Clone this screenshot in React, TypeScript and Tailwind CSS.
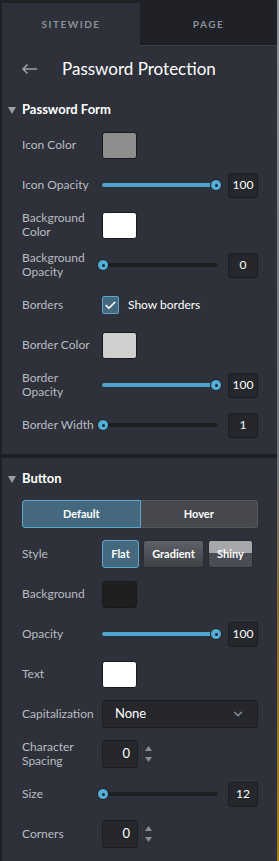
import { ChevronDown, Check } from 'lucide-react';

const font = { fontFamily: 'Lato, "Open Sans", sans-serif' };

function Label({ children }: { children: React.ReactNode }) {
  return <div className="w-[80px] shrink-0 text-[12px] leading-[14px] text-[#b8bcc3]">{children}</div>;
}

function Row({ label, children }: { label: React.ReactNode; children: React.ReactNode }) {
  return (
    <div className="flex h-[40px] items-center pl-[20px] pr-[19px]">
      <Label>{label}</Label>
      <div className="flex flex-1 items-center">{children}</div>
    </div>
  );
}

function Swatch({ color }: { color: string }) {
  return <div className={`h-[27px] w-[35px] rounded-[3px] border border-[#18191c] ${color}`} />;
}

function NumBox({ value }: { value: string }) {
  return (
    <div className="flex h-[25px] w-[30px] items-center justify-center rounded-[3px] border border-[#1b1c20] bg-[#25272c] text-[12px] text-white">
      {value}
    </div>
  );
}

function Slider({ value, full }: { value: string; full?: boolean }) {
  return (
    <div className="flex flex-1 items-center gap-[6px]">
      <div className="relative h-[12px] flex-1">
        <div className="absolute left-0 right-[4px] top-[4px] h-[4px] rounded-full bg-[#1d1f23]" />
        {full && <div className="absolute left-0 right-[4px] top-[4px] h-[4px] rounded-full bg-[#4ea5cf]" />}
        <div
          className={`absolute top-0 flex h-[12px] w-[12px] items-center justify-center rounded-full border border-[#1a1c20] bg-[#55aed6] ${
            full ? 'right-0' : 'left-[-5px]'
          }`}
        >
          <div className="h-[3px] w-[3px] rounded-full bg-[#1c2a33]" />
        </div>
      </div>
      <NumBox value={value} />
    </div>
  );
}

function Spinner({ value }: { value: string }) {
  return (
    <div className="flex items-center gap-[7px]">
      <div className="flex h-[28px] w-[36px] items-center justify-end rounded-[3px] border border-[#1b1c20] bg-[#25272c] pr-[7px] text-[13px] text-white">
        {value}
      </div>
      <div className="flex flex-col gap-[6px] text-[#8a8e95]">
        <svg width="7" height="5" viewBox="0 0 7 5">
          <path d="M3.5 0L7 5H0z" fill="currentColor" />
        </svg>
        <svg width="7" height="5" viewBox="0 0 7 5">
          <path d="M0 0h7L3.5 5z" fill="currentColor" />
        </svg>
      </div>
    </div>
  );
}

function SectionHeader({ title }: { title: string }) {
  return (
    <div className="flex h-[26px] items-center gap-[6px] pl-[6px]">
      <svg width="8" height="7" viewBox="0 0 8 7" className="text-[#9a9ea5]">
        <path d="M0 0h8L4 7z" fill="currentColor" />
      </svg>
      <span className="text-[13px] font-bold text-white">{title}</span>
    </div>
  );
}

export default function App() {
  return (
    <div style={font} className="flex h-[861px] w-[279px] bg-[#2e3139]">
      <div className="w-[2px] bg-[#1f2125]" />
      <div className="flex flex-1 flex-col">
        <div className="h-[3px] bg-[#1f2125]" />
        <div className="flex h-[43px]">
          <div className="flex w-[138px] items-center justify-center text-[10px] font-bold tracking-[0.15em] text-[#8c919a]">
            SITEWIDE
          </div>
          <div className="flex flex-1 items-center justify-center border-b border-[#3a3d44] bg-[#1f2126] text-[10px] font-bold tracking-[0.15em] text-[#8c919a]">
            PAGE
          </div>
        </div>
        <div className="flex h-[46px] items-center pl-[19px]">
          <svg width="17" height="12" viewBox="0 0 17 12" className="text-[#9aa0a8]">
            <path d="M16 6H2M6.5 1.5L2 6l4.5 4.5" stroke="currentColor" strokeWidth="1.6" fill="none" />
          </svg>
          <span className="ml-[24px] text-[17px] text-white">Password Protection</span>
        </div>
        <div className="mt-[5px]">
          <SectionHeader title="Password Form" />
        </div>
        <div className="mt-[2px]">
          <Row label="Icon Color">
            <Swatch color="bg-[#8e8e8e]" />
          </Row>
          <Row label="Icon Opacity">
            <Slider value="100" full />
          </Row>
          <Row label={<>Background<br />Color</>}>
            <Swatch color="bg-white" />
          </Row>
          <Row label={<>Background<br />Opacity</>}>
            <Slider value="0" />
          </Row>
          <Row label="Borders">
            <div className="flex h-[18px] w-[17px] items-center justify-center rounded-[2px] border border-[#5aa7cf] bg-[#44697f]">
              <Check className="h-[13px] w-[13px] text-white" strokeWidth={3} />
            </div>
            <span className="ml-[9px] text-[12px] text-white">Show borders</span>
          </Row>
          <Row label="Border Color">
            <Swatch color="bg-[#d0d0d0]" />
          </Row>
          <Row label={<>Border<br />Opacity</>}>
            <Slider value="100" full />
          </Row>
          <Row label="Border Width">
            <Slider value="1" />
          </Row>
        </div>
        <div className="mt-[9px] h-[4px] bg-[#1d1f23]" />
        <div className="mt-[8px]">
          <SectionHeader title="Button" />
        </div>
        <div className="ml-[20px] mr-[19px] mt-[8px] flex h-[28px] text-[11px] font-bold text-white">
          <div className="flex flex-1 items-center justify-center rounded-l-[3px] border border-[#5aa7cf] bg-[#44697f]">
            Default
          </div>
          <div className="flex flex-1 items-center justify-center rounded-r-[3px] border border-l-0 border-[#55585f] bg-[#46484e]">
            Hover
          </div>
        </div>
        <div className="mt-[6px]">
          <Row label="Style">
            <div className="flex gap-[4px] text-[11px] font-bold text-white">
              <div className="flex h-[28px] w-[37px] items-center justify-center rounded-[3px] border border-[#5aa7cf] bg-[#44697f]">
                Flat
              </div>
              <div className="flex h-[28px] w-[61px] items-center justify-center rounded-[3px] border border-[#2a2c31] bg-gradient-to-b from-[#5e6167] to-[#3e4146]">
                Gradient
              </div>
              <div className="flex h-[28px] w-[45px] items-center justify-center rounded-[3px] border border-[#2a2c31] bg-[linear-gradient(#a6a8ab_0%,#a6a8ab_45%,#4a4d53_45%,#4a4d53_100%)]">
                Shiny
              </div>
            </div>
          </Row>
          <Row label="Background">
            <Swatch color="bg-[#1f1f1f]" />
          </Row>
          <Row label="Opacity">
            <Slider value="100" full />
          </Row>
          <Row label="Text">
            <Swatch color="bg-white" />
          </Row>
          <Row label="Capitalization">
            <div className="flex h-[28px] flex-1 items-center justify-between rounded-[3px] border border-[#1b1c20] bg-[#25272c] pl-[12px] pr-[12px] text-[13px] text-white">
              None
              <ChevronDown className="h-[14px] w-[14px] text-[#8a8e95]" strokeWidth={2.5} />
            </div>
          </Row>
          <Row label={<>Character<br />Spacing</>}>
            <Spinner value="0" />
          </Row>
          <Row label="Size">
            <Slider value="12" />
          </Row>
          <Row label="Corners">
            <Spinner value="0" />
          </Row>
        </div>
      </div>
      <div className="w-[2px] bg-[linear-gradient(#8d9096_0%,#6d6f74_55%,#8a6a2a_70%,#b07d22_100%)]" />
    </div>
  );
}
